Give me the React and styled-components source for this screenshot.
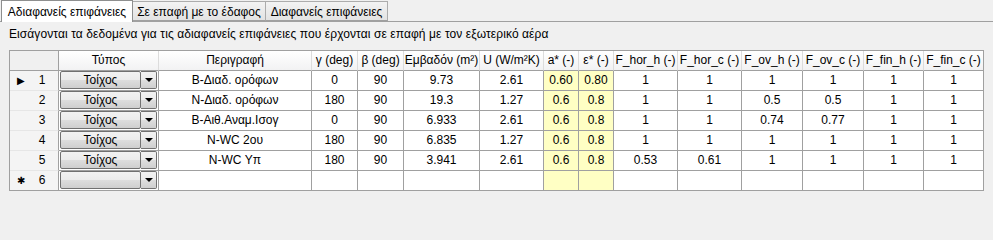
import React from 'react'
import styled, { createGlobalStyle } from 'styled-components'

const GlobalStyle = createGlobalStyle`
  html, body {
    margin: 0;
    padding: 0;
    background: #f0f0f0;
  }
  body {
    font-family: "Liberation Sans", Arial, sans-serif;
    font-size: 11px;
    color: #000;
  }
`

const Window = styled.div`
  width: 993px;
  height: 206px;
  overflow: hidden;
  background: #f0f0f0;
`

const TabStrip = styled.div`
  display: flex;
  align-items: flex-end;
  height: 22px;
  padding-left: 1px;
  border-bottom: 1px solid #a0a0a0;
  box-sizing: border-box;
`

const Tab = styled.div`
  box-sizing: border-box;
  height: ${props => props.active ? '22px' : '20px'};
  width: ${props => props.width}px;
  margin-bottom: ${props => props.active ? '-1px' : '0'};
  padding-top: ${props => props.active ? '4px' : '3px'};
  text-align: center;
  white-space: nowrap;
  font-size: 12px;
  background: ${props => props.active ? '#ffffff' : 'linear-gradient(#f3f3f3, #e3e3e3)'};
  border: 1px solid ${props => props.active ? '#8e8f8f' : '#acacac'};
  border-bottom: ${props => props.active ? 'none' : '1px solid #a0a0a0'};
  margin-left: ${props => props.first ? '0' : '-1px'};
  position: relative;
  z-index: ${props => props.active ? 1 : 0};
`

const Panel = styled.div`
  padding: 6px 0 0 9px;
`

const Caption = styled.div`
  height: 22px;
  font-size: 12px;
  line-height: 13px;
  letter-spacing: 0.09px;
`

const Grid = styled.div`
  display: grid;
  grid-template-columns: 49px 100px 153px 46px 46px 76px 64px 35px 35px 64px 64px 61px 61px 60px 60px;
  grid-auto-rows: 20px;
  width: 975px;
  border-left: 1px solid #a0a0a0;
  border-top: 1px solid #a0a0a0;
  box-sizing: border-box;
`

const HeadCell = styled.div`
  box-sizing: border-box;
  height: 20px;
  background: linear-gradient(#ffffff, #f2f2f3);
  border-right: 1px solid ${props => props.last ? '#a0a0a0' : '#dcdcdc'};
  border-bottom: 1px solid #a0a0a0;
  display: flex;
  align-items: center;
  justify-content: center;
  white-space: nowrap;
  font-size: 12px;
  padding-bottom: 1px;
`

const CornerCell = styled(HeadCell)`
  background: #f0f0f0;
  border-right: 1px solid #a0a0a0;
`

const RowHead = styled.div`
  box-sizing: border-box;
  background: #f4f4f4;
  border-right: 1px solid #a0a0a0;
  border-bottom: 1px solid ${props => props.last ? '#a0a0a0' : '#e6e6e6'};
  display: flex;
  align-items: center;
  font-size: 12px;
  padding-bottom: 1px;
`

const Marker = styled.span`
  width: 26px;
  padding-left: 7px;
  box-sizing: border-box;
  font-size: 10px;
`

const RowNum = styled.span`
  width: 12px;
  text-align: center;
`

const Cell = styled.div`
  box-sizing: border-box;
  background: ${props => props.yellow ? '#ffffc4' : '#ffffff'};
  border-right: 1px solid #a0a0a0;
  border-bottom: 1px solid #a0a0a0;
  display: flex;
  align-items: center;
  justify-content: center;
  white-space: nowrap;
  font-size: 12px;
  padding-bottom: 1px;
`

const ComboCell = styled(Cell)`
  padding: 0 1px 1px 1px;
  justify-content: flex-start;
`

const Combo = styled.div`
  display: flex;
  width: 97px;
  height: 18px;
`

const ComboMain = styled.div`
  box-sizing: border-box;
  flex: 1;
  border: 1px solid #707070;
  border-radius: 2px;
  background: linear-gradient(#f2f2f2 0%, #ebebeb 50%, #dddddd 51%, #cfcfcf 100%);
  display: flex;
  align-items: center;
  justify-content: center;
  font-size: 12px;
`

const ComboButton = styled.div`
  box-sizing: border-box;
  width: 16px;
  border: 1px solid #707070;
  border-left: none;
  border-radius: 0 2px 2px 0;
  background: linear-gradient(#f2f2f2 0%, #ebebeb 50%, #dddddd 51%, #cfcfcf 100%);
  display: flex;
  align-items: center;
  justify-content: center;
`

const Arrow = styled.span`
  width: 0;
  height: 0;
  border-left: 4px solid transparent;
  border-right: 4px solid transparent;
  border-top: 4px solid #000;
`

const headers = [
  'Τύπος', 'Περιγραφή', 'γ (deg)', 'β (deg)', 'Εμβαδόν (m²)', 'U (W/m²K)',
  'a* (-)', 'ε* (-)', 'F_hor_h (-)', 'F_hor_c (-)', 'F_ov_h (-)', 'F_ov_c (-)',
  'F_fin_h (-)', 'F_fin_c (-)'
]

const rows = [
  ['Β-Διαδ. ορόφων', '0', '90', '9.73', '2.61', '0.60', '0.80', '1', '1', '1', '1', '1', '1'],
  ['Ν-Διαδ. ορόφων', '180', '90', '19.3', '1.27', '0.6', '0.8', '1', '1', '0.5', '0.5', '1', '1'],
  ['Β-Αιθ.Αναμ.Ισογ', '0', '90', '6.933', '2.61', '0.6', '0.8', '1', '1', '0.74', '0.77', '1', '1'],
  ['N-WC 2ου', '180', '90', '6.835', '1.27', '0.6', '0.8', '1', '1', '1', '1', '1', '1'],
  ['N-WC Υπ', '180', '90', '3.941', '2.61', '0.6', '0.8', '0.53', '0.61', '1', '1', '1', '1']
]

const yellowCols = [5, 6]

const TypeCombo = ({ value }) => (
  <Combo>
    <ComboMain>{value}</ComboMain>
    <ComboButton><Arrow /></ComboButton>
  </Combo>
)

const App = () => (
  <Window>
    <GlobalStyle />
    <TabStrip>
      <Tab active first width={132}>Αδιαφανείς επιφάνειες</Tab>
      <Tab width={134}>Σε επαφή με το έδαφος</Tab>
      <Tab width={123}>Διαφανείς επιφάνειες</Tab>
    </TabStrip>
    <Panel>
      <Caption>Εισάγονται τα δεδομένα για τις αδιαφανείς επιφάνειες που έρχονται σε επαφή με τον εξωτερικό αέρα</Caption>
      <Grid>
        <CornerCell />
        {headers.map((h, i) => (
          <HeadCell key={h} last={i === headers.length - 1}>{h}</HeadCell>
        ))}
        {rows.map((r, ri) => (
          <React.Fragment key={ri}>
            <RowHead>
              <Marker>{ri === 0 ? '▶' : ''}</Marker>
              <RowNum>{ri + 1}</RowNum>
            </RowHead>
            <ComboCell><TypeCombo value="Τοίχος" /></ComboCell>
            {r.map((v, ci) => (
              <Cell key={ci} yellow={yellowCols.includes(ci)}>{v}</Cell>
            ))}
          </React.Fragment>
        ))}
        <RowHead last>
          <Marker>✱</Marker>
          <RowNum>6</RowNum>
        </RowHead>
        <ComboCell><TypeCombo value="" /></ComboCell>
        {rows[0].map((v, ci) => (
          <Cell key={ci} yellow={yellowCols.includes(ci)} />
        ))}
      </Grid>
    </Panel>
  </Window>
)

export default App
